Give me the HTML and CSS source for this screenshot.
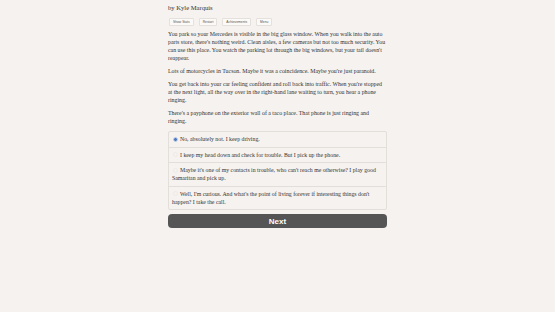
FILE: index.html
```html
<html>

<head>
    <link rel="stylesheet" href="styles.css">
</head>

<body>
    <div class="page">
        <p class="byline">by Kyle Marquis</p>
        <div class="buttons">
            <button class="small-btn">Show Stats</button>
            <button class="small-btn">Restart</button>
            <button class="small-btn">Achievements</button>
            <button class="small-btn">Menu</button>
        </div>

        <div class="story">
            <p>You park so your Mercedes is visible in the big glass window. When you walk into the auto parts store, there's nothing weird. Clean aisles, a few cameras but not too much security. You can use this place. You watch the parking lot through the big windows, but your tail doesn't reappear.</p>
            <p>Lots of motorcycles in Tucson. Maybe it was a coincidence. Maybe you're just paranoid.</p>
            <p>You get back into your car feeling confident and roll back into traffic. When you're stopped at the next light, all the way over in the right-hand lane waiting to turn, you hear a phone ringing.</p>
            <p>There's a payphone on the exterior wall of a taco place. That phone is just ringing and ringing.</p>
        </div>

        <ul class="choices">
            <li class="choice is-selected"><span class="radio"></span>No, absolutely not. I keep driving.</li>
            <li class="choice"><span class="radio"></span>I keep my head down and check for trouble. But I pick up the phone.</li>
            <li class="choice"><span class="radio"></span>Maybe it's one of my contacts in trouble, who can't reach me otherwise? I play good Samaritan and pick up.</li>
            <li class="choice"><span class="radio"></span>Well, I'm curious. And what's the point of living forever if interesting things don't happen? I take the call.</li>
        </ul>

        <button class="next-btn">Next</button>
    </div>
</body>

</html>
```

FILE: styles.css
```css
* {
    box-sizing: border-box;
}

body {
    margin: 0;
    background: #f5f2ef;
    font-family: 'Liberation Serif', serif;
    color: #333;
}

.page {
    width: 219px;
    margin: 0 auto;
    padding-top: 4px;
}

.byline {
    margin: 0;
    font-size: 6.6px;
    line-height: 8px;
    color: #333;
}

.buttons {
    display: flex;
    gap: 5px;
    margin-top: 6px;
    padding-left: 1px;
}

.small-btn {
    font-family: 'Liberation Sans', sans-serif;
    font-size: 3.3px;
    line-height: 4px;
    padding: 1px 3px;
    background: #fbfaf8;
    border: solid 0.5px #e4e0dc;
    border-radius: 1px;
    color: #555;
}

.story {
    margin-top: 4px;
}

.story p {
    margin: 0 0 5px;
    font-size: 5.86px;
    line-height: 8px;
}

.choices {
    list-style: none;
    margin: 6px 0 0;
    padding: 0;
    border: solid 1px #e2dfdb;
    border-radius: 2px;
}

.choice {
    font-size: 5.82px;
    line-height: 8px;
    padding: 3px 3px 3.5px;
    border-top: solid 1px #e2dfdb;
}

.choice:first-child {
    border-top: none;
}

.radio {
    display: inline-block;
    width: 5px;
    height: 5px;
    margin: 0 2px -0.5px 1px;
    border-radius: 50%;
    border: solid 0.5px #eeeae6;
}

.is-selected .radio {
    background: #4a78c2;
    border: solid 1px #c6d3e8;
}

.next-btn {
    display: block;
    width: 100%;
    height: 14px;
    margin-top: 4px;
    background: #555;
    border: none;
    border-radius: 4px;
    color: #fff;
    font-family: 'Liberation Sans', sans-serif;
    font-weight: bold;
    font-size: 8px;
    padding: 0;
}
```
